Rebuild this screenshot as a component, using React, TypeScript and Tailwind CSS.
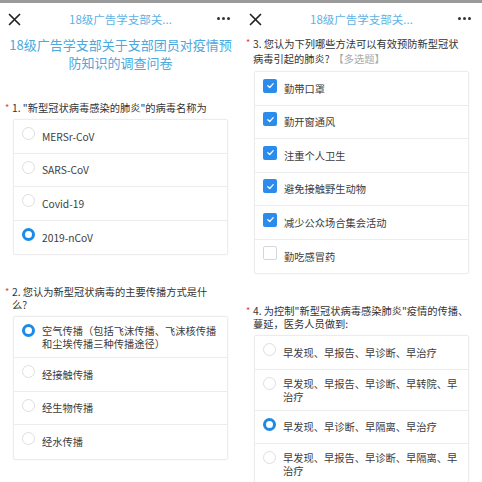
import React from "react";

const FONT = { fontFamily: '"Noto Sans CJK SC", "Noto Sans", sans-serif' };

function Radio({ checked }: { checked?: boolean }) {
  return checked ? (
    <span className="h-[13px] w-[13px] shrink-0 rounded-full border-[3px] border-[#1c8ae6] bg-white" />
  ) : (
    <span className="h-[13px] w-[13px] shrink-0 rounded-full border border-[#dedede] bg-white" />
  );
}

function Check({ checked }: { checked?: boolean }) {
  return checked ? (
    <span className="flex h-[14px] w-[14px] shrink-0 items-center justify-center rounded-[2px] bg-[#2a8cec]">
      <svg width="9" height="9" viewBox="0 0 10 10">
        <path d="M2 5.2 L4.2 7.2 L8 3" fill="none" stroke="#fff" strokeWidth="1.4" strokeLinecap="round" strokeLinejoin="round" />
      </svg>
    </span>
  ) : (
    <span className="h-[14px] w-[14px] shrink-0 rounded-[2px] border border-[#d6d6d6] bg-white" />
  );
}

type Opt = { text: string; checked?: boolean };

function Options({ items, kind }: { items: Opt[]; kind: "radio" | "check" }) {
  return (
    <div className="mx-[13px] rounded-[2px] border border-[#ececec] shadow-[0_0_2px_rgba(0,0,0,0.06)]">
      {items.map((o, i) => (
        <div
          key={i}
          className={
            "flex min-h-[33.5px] items-center gap-[7px] py-[7px] pl-[8px] pr-[3px] " +
            (i < items.length - 1 ? "border-b border-[#ececec]" : "")
          }
        >
          <div className="flex h-[13px] items-center self-start">
            {kind === "radio" ? <Radio checked={o.checked} /> : <Check checked={o.checked} />}
          </div>
          <div className="text-[10.25px] leading-[13px] text-[#3c3c3c]">{o.text}</div>
        </div>
      ))}
    </div>
  );
}

function Header() {
  return (
    <div className="relative flex h-[33px] items-center justify-center">
      <svg className="absolute left-[8px] top-[10px]" width="13" height="13" viewBox="0 0 13 13">
        <path d="M1.5 1.5 L11.5 11.5 M11.5 1.5 L1.5 11.5" stroke="#222" strokeWidth="1.7" strokeLinecap="round" />
      </svg>
      <div className="text-[11.5px] text-[#5cb3e6]">18级广告学支部关...</div>
      <div className="absolute right-[11px] top-[14px] flex gap-[2px]">
        <span className="h-[3px] w-[3px] rounded-full bg-[#333]" />
        <span className="h-[3px] w-[3px] rounded-full bg-[#333]" />
        <span className="h-[3px] w-[3px] rounded-full bg-[#333]" />
      </div>
    </div>
  );
}

function Question({ children, className = "" }: { children: React.ReactNode; className?: string }) {
  return (
    <div className={"relative pl-[12px] text-[10.25px] text-[#333] " + className}>
      <span className="absolute left-[5px] top-[0px] text-[9px] leading-[13px] text-[#e03c3c]">*</span>
      {children}
    </div>
  );
}

export default function App() {
  return (
    <div className="h-[482px] w-[482px] overflow-hidden bg-white" style={FONT}>
      <div className="h-[3px] w-full bg-[#9a9a9a]" />
      <div className="flex">
        {/* left panel */}
        <div className="w-[241px] shrink-0">
          <Header />
          <div className="px-[8px] text-center text-[13px] leading-[18px] text-[#4aa9de]">
            18级广告学支部关于支部团员对疫情预防知识的调查问卷
          </div>
          <Question className="mt-[29px] pr-[6px] leading-[13px]">1. "新型冠状病毒感染的肺炎"的病毒名称为</Question>
          <div className="mt-[5px]">
            <Options
              kind="radio"
              items={[
                { text: "MERSr-CoV" },
                { text: "SARS-CoV" },
                { text: "Covid-19" },
                { text: "2019-nCoV", checked: true },
              ]}
            />
          </div>
          <Question className="mt-[30px] pr-[28px] leading-[13px]">2. 您认为新型冠状病毒的主要传播方式是什么?</Question>
          <div className="mt-[5px]">
            <Options
              kind="radio"
              items={[
                { text: "空气传播（包括飞沫传播、飞沫核传播和尘埃传播三种传播途径）", checked: true },
                { text: "经接触传播" },
                { text: "经生物传播" },
                { text: "经水传播" },
              ]}
            />
          </div>
        </div>
        {/* right panel */}
        <div className="w-[241px] shrink-0">
          <Header />
          <Question className="mt-[0px] pr-[6px] leading-[15px]">
            <div>3. 您认为下列哪些方法可以有效预防新型冠状</div>
            <div className="flex gap-[4px]">
              <span>病毒引起的肺炎?</span>
              <span className="text-[#aaa]">【多选题】</span>
            </div>
          </Question>
          <div className="mt-[5px]">
            <Options
              kind="check"
              items={[
                { text: "勤带口罩", checked: true },
                { text: "勤开窗通风", checked: true },
                { text: "注重个人卫生", checked: true },
                { text: "避免接触野生动物", checked: true },
                { text: "减少公众场合集会活动", checked: true },
                { text: "勤吃感冒药" },
              ]}
            />
          </div>
          <Question className="mt-[30px] pr-[6px] leading-[13px]">4. 为控制"新型冠状病毒感染肺炎"疫情的传播、蔓延，医务人员做到:</Question>
          <div className="mt-[5px]">
            <Options
              kind="radio"
              items={[
                { text: "早发现、早报告、早诊断、早治疗" },
                { text: "早发现、早报告、早诊断、早转院、早治疗" },
                { text: "早发现、早诊断、早隔离、早治疗", checked: true },
                { text: "早发现、早报告、早诊断、早隔离、早治疗" },
              ]}
            />
          </div>
        </div>
      </div>
    </div>
  );
}
